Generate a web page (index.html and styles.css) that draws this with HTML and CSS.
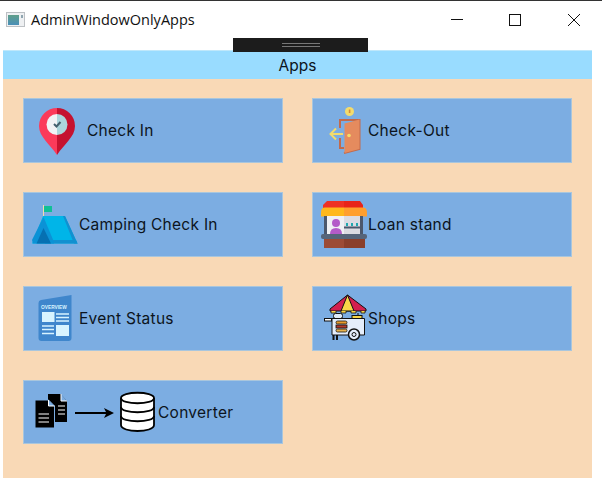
FILE: index.html
```html
<!DOCTYPE html>
<html lang="en">
<head>
<meta charset="utf-8">
<title>AdminWindowOnlyApps</title>
<link rel="stylesheet" href="styles.css">
</head>
<body>
<div class="window">
  <header class="titlebar">
    <svg class="app-icon" viewBox="6 11 19 15" width="19" height="15" aria-hidden="true">
      <defs><linearGradient id="ag" x1="0" y1="0" x2="0" y2="1"><stop offset="0" stop-color="#5f9f8a"/><stop offset="1" stop-color="#4a8fb8"/></linearGradient></defs>
      <rect x="6.500" y="11.500" width="18" height="14" fill="#eef0f2" stroke="#bcc0c4"/>
      <rect x="8" y="14" width="11" height="10" fill="url(#ag)"/>
      <rect x="21" y="14" width="2" height="3" fill="#8fa5b0"/>
    </svg>
    <span class="title">AdminWindowOnlyApps</span>
    <div class="controls">
      <svg class="ctl" viewBox="0 0 14 14" width="14" height="14" aria-hidden="true"><path d="M1 6.500H13" stroke="#111" fill="none"/></svg>
      <svg class="ctl" viewBox="0 0 14 14" width="14" height="14" aria-hidden="true"><rect x="1.500" y="1.500" width="11" height="11" stroke="#111" fill="none"/></svg>
      <svg class="ctl ctl-close" viewBox="0 0 14 14" width="14" height="14" aria-hidden="true"><path d="M1 1L13 13M13 1L1 13" stroke="#111" fill="none"/></svg>
    </div>
  </header>
  <div class="debug-tab"><span class="debug-grip"></span></div>
  <main class="panel">
    <h1 class="panel-head">Apps</h1>
    <div class="grid">
      <a class="card">
        <svg class="icon w-check-in" viewBox="24 99 62 63" aria-hidden="true">
          <path d="M57 108a18 18 0 0 0-18 18c0 11 11 18 18 29z" fill="#fb3a5a"/>
          <path d="M57 108a18 18 0 0 1 18 18c0 11-11 18-18 29z" fill="#c5122f"/>
          <path d="M57 114a10.500 10.500 0 0 0 0 21z" fill="#f1f3f5"/>
          <path d="M57 114a10.500 10.500 0 0 1 0 21z" fill="#acd6dc"/>
          <path d="M54 124l2.500 2.500 4-4.500" fill="none" stroke="#44606e" stroke-width="2"/>
        </svg>
        <span class="label">Check In</span>
      </a>
      <a class="card">
        <svg class="icon w-check-out" viewBox="313 99 54 63" aria-hidden="true">
          <circle cx="349.500" cy="111.500" r="4.500" fill="#f4dc6c"/>
          <rect x="348.800" y="109.500" width="1.600" height="3.500" fill="#d58a3c"/>
          <path d="M340 128V120H359.500V149L344 153M340 138V148H344" fill="none" stroke="#c26a4c" stroke-width="2"/>
          <path d="M344.500 123.500L359.500 119.500V149L344.500 153z" fill="#e58b5e"/>
          <circle cx="349" cy="135.500" r="1.800" fill="#f4dc6c"/>
          <path d="M343 134H331M336 128.500L330.500 134L336 139.500" fill="none" stroke="#f4dc6c" stroke-width="2"/>
        </svg>
        <span class="label">Check-Out</span>
      </a>
      <a class="card">
        <svg class="icon w-camping" viewBox="24 193 54 63" aria-hidden="true">
          <path d="M43.500 205V219" stroke="#f0dcb0" fill="none"/>
          <rect x="44" y="206" width="8" height="6" fill="#0fc096"/>
          <path d="M43 216H65L77.500 243.500H32z" fill="#00b5e8"/>
          <path d="M65 216L77.500 243.500H74L63 216z" fill="#1290d0"/>
          <path d="M45 240H76L77.500 243.500H45z" fill="#1290d0"/>
          <path d="M43.500 217L32 240L33 243.500H54L54 242z" fill="#0b92d6"/>
          <path d="M43.500 228L36.500 243.500H51z" fill="#0670b2"/>
        </svg>
        <span class="label">Camping Check In</span>
      </a>
      <a class="card">
        <svg class="icon w-loan" viewBox="313 193 54 63" aria-hidden="true">
          <path d="M327 201h17v7h-21v-3z" fill="#ee3124"/>
          <path d="M344 201h16l3 4v3h-19z" fill="#e8241a"/>
          <path d="M325 207.500h19v9h-23v-4q0-5 4-5z" fill="#ffb81c"/>
          <path d="M344 207.500h19q4 0 4 5v4h-23z" fill="#ff9f2e"/>
          <rect x="324" y="216" width="20" height="19" fill="#f0f0f3"/>
          <rect x="344" y="216" width="17" height="19" fill="#dcdce2"/>
          <rect x="324" y="216" width="3" height="19" fill="#4c586c"/>
          <rect x="360" y="216" width="3" height="19" fill="#4c586c"/>
          <circle cx="336" cy="223" r="4" fill="#b45bc8"/>
          <path d="M330 234q0-6 6-6t6 6z" fill="#b45bc8"/>
          <rect x="344" y="226.500" width="16" height="2" fill="#4c586c"/>
          <path d="M346 223h2v3h-2zM351 223h2v3h-2zM356 223h2v3h-2z" fill="#20a8b0"/>
          <rect x="321" y="234" width="46" height="5" rx="2" fill="#56657a"/>
          <rect x="324" y="239" width="20" height="9" fill="#9c4b35"/>
          <rect x="344" y="239" width="21" height="9" fill="#8a3f2b"/>
        </svg>
        <span class="label">Loan stand</span>
      </a>
      <a class="card">
        <svg class="icon w-event" viewBox="24 287 54 63" aria-hidden="true">
          <path d="M41 300L71.500 295V338a3 3 0 0 1-3 3H41.500a3 3 0 0 1-3-3V303a3 3 0 0 1 2.500-3z" fill="#3f86cc"/>
          <text class="ov" x="41" y="309">OVERVIEW</text>
          <rect x="42" y="312" width="12.500" height="10" fill="#d8f4ff"/>
          <path d="M56 314H69M56 317.500H69M56 321H69M42 326H54M42 329.500H54M42 333.500H54" stroke="#d8f4ff" stroke-width="1.500" fill="none"/>
          <rect x="56" y="325" width="13" height="11" fill="#d8f4ff"/>
        </svg>
        <span class="label">Event Status</span>
      </a>
      <a class="card">
        <svg class="icon w-shops" viewBox="313 287 54 63" aria-hidden="true">
          <path d="M347.500 295L330 309V311H366V309z" fill="#d3204f" stroke="#111" stroke-linejoin="round"/>
          <path d="M347.500 295L341 311H354z" fill="#f9d648" stroke="#111"/>
          <path d="M331 311v2h5v-2M341 311v2h5v-2M351 311v2h5v-2M361 311v2h4v-2" fill="#f9d648" stroke="#111" stroke-width=".8"/>
          <path d="M339 313V318M358 313V316" stroke="#111" fill="none"/>
          <rect x="333.500" y="313.500" width="9" height="5" rx="2" fill="#dfeaf6" stroke="#111"/>
          <rect x="352" y="315.500" width="10" height="3.500" fill="#f9d648" stroke="#111"/>
          <rect x="324.500" y="318.500" width="7" height="2.500" fill="#fff" stroke="#111"/>
          <path d="M332 318.500H364.500V335H332z" fill="#e5eefb" stroke="#111"/>
          <rect x="336" y="321" width="11" height="3" rx="1.500" fill="#e89b2c" stroke="#111" stroke-width=".8"/>
          <rect x="336" y="325" width="11" height="3" fill="#b23a2c" stroke="#111" stroke-width=".8"/>
          <rect x="336" y="329" width="11" height="3" rx="1.500" fill="#e8b34c" stroke="#111" stroke-width=".8"/>
          <path d="M333.500 335V340M337 335V340" stroke="#111" stroke-width="2" fill="none"/>
          <circle cx="354" cy="334.500" r="5.500" fill="#e5eefb" stroke="#111" stroke-width="1.500"/>
          <circle cx="354" cy="334.500" r="2" fill="none" stroke="#111"/>
        </svg>
        <span class="label">Shops</span>
      </a>
      <a class="card">
        <svg class="icon w-conv" viewBox="24 381 133 62" aria-hidden="true">
          <path d="M48 394H60.500L67 401V422H48z" fill="#000"/>
          <path d="M35 400H48.500L54.500 406V428H35z" fill="#000" stroke="#7cade2"/>
          <path d="M38.500 414H49M38.500 418H49M38.500 422H49M58 406H65M58 410H65M58 414H65" stroke="#fff" stroke-width="1.200" fill="none"/>
          <path d="M61 394V401H67" fill="#7cade2" stroke="#fff"/>
          <path d="M48.500 400V406H54.500" fill="#7cade2" stroke="#fff"/>
          <path d="M75 413H111" stroke="#000" stroke-width="1.800" fill="none"/>
          <path d="M114 413L104 408L106.500 413L104 418z" fill="#000"/>
          <path d="M121 398C121 391 154 391 154 398V425C154 433 121 433 121 425z" fill="#fff" stroke="#000" stroke-width="1.800"/>
          <path d="M121 398C121 405 154 405 154 398M121 407C121 414 154 414 154 407M121 416C121 423 154 423 154 416" fill="none" stroke="#000" stroke-width="1.800"/>
        </svg>
        <span class="label">Converter</span>
      </a>
    </div>
  </main>
</div>
</body>
</html>
```
FILE: styles.css
```css
* { box-sizing: border-box; }
html, body { margin: 0; background: #fff; }
.window {
  position: relative;
  width: 602px;
  height: 486px;
  border-top: 1px solid #333;
  overflow: hidden;
  font-family: Inter, "Liberation Sans", sans-serif;
  color: #0c1420;
}
.titlebar {
  height: 37px;
  display: flex;
  align-items: center;
  padding-left: 6px;
}
.app-icon { display: block; flex: none; }
.title {
  margin-left: 6px;
  font: 14.5px "Open Sans", "Noto Sans", sans-serif;
  color: #111;
}
.controls {
  margin-left: auto;
  display: flex;
  gap: 44px;
  padding-right: 21px;
}
.ctl { display: block; }
.ctl-close { margin-left: 1px; }
.debug-tab {
  position: absolute;
  left: 233px;
  top: 37px;
  width: 135px;
  height: 14px;
  background: #1c1c1c;
  display: flex;
  justify-content: center;
  align-items: center;
}
.debug-grip {
  width: 38px;
  height: 4px;
  border-top: 1px solid #777;
  border-bottom: 1px solid #777;
}
.panel {
  margin: 12px 10px 0 3px;
  height: 428px;
  background: #f9d9b6;
  display: flex;
  flex-direction: column;
}
.panel-head {
  margin: 0;
  height: 29px;
  background: #99dcff;
  border-top: 1px solid #bfe8fb;
  display: flex;
  align-items: center;
  justify-content: center;
  font-size: 15.5px;
  font-weight: 400;
}
.grid {
  display: grid;
  grid-template-columns: 260px 260px;
  grid-template-rows: 65px 65px 65px 64px;
  column-gap: 29px;
  row-gap: 29px;
  padding: 19px 0 0 20px;
}
.card {
  display: flex;
  align-items: center;
  background: #7cade2;
  border: 1px solid #a9c6dd;
}
.icon { display: block; flex: none; height: 63px; }
.w-check-in { width: 62px; }
.w-check-out { width: 54px; }
.w-camping { width: 54px; }
.w-loan { width: 54px; }
.w-event { width: 54px; }
.w-shops { width: 54px; }
.w-conv { width: 133px; height: 62px; }
.label { margin-left: 1px; font-size: 15.5px; letter-spacing: 0.27px; white-space: nowrap; }
.ov { font: 700 4.800px "Liberation Sans", sans-serif; fill: #d8f4ff; }
```
